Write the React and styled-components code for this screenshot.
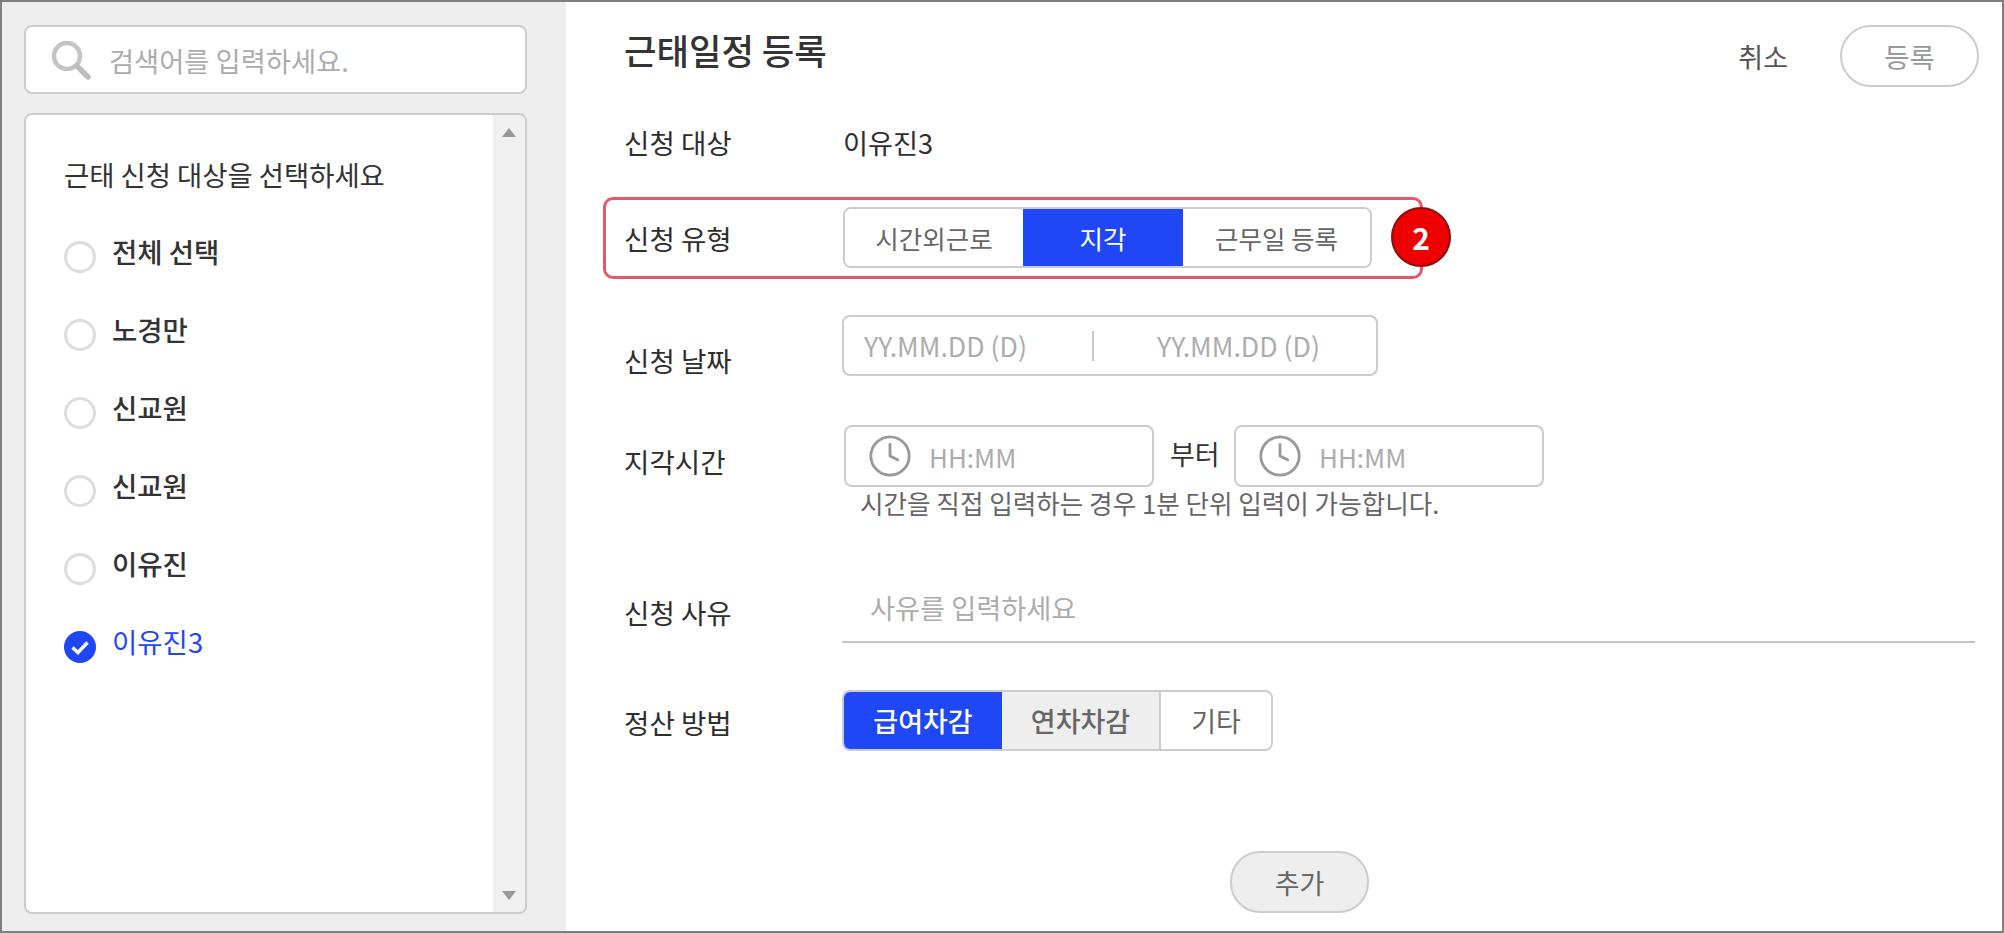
import styled, { createGlobalStyle } from "styled-components";
import { Clock } from "lucide-react";

const MEMBERS = ["전체 선택", "노경만", "신교원", "신교원", "이유진", "이유진3"];

const TYPE_OPTIONS = [
  { text: "시간외근로", width: 178 },
  { text: "지각", width: 160, variant: "active" },
  { text: "근무일 등록", width: 187 },
];

const PAY_OPTIONS = [
  { text: "급여차감", width: 158, variant: "active", bold: true },
  { text: "연차차감", width: 159, variant: "muted", bold: true },
  { text: "기타", width: 110 },
];

const GlobalStyle = createGlobalStyle`
  html, body {
    margin: 0;
    padding: 0;
    background: #fff;
    font-family: "Noto Sans CJK KR", "Noto Sans", sans-serif;
  }
  * {
    box-sizing: border-box;
  }
`;

export default function App() {
  return (
    <>
      <GlobalStyle />
      <Frame>
        <Sidebar>
          <SearchBox>
            <svg width="40" height="40" viewBox="0 0 40 40" fill="none">
              <circle cx="16" cy="16" r="13" stroke="#c4c4c4" strokeWidth="4.5" />
              <path d="M26 26 L37 37" stroke="#bdbdbd" strokeWidth="5.5" strokeLinecap="round" />
            </svg>
            <SearchText>검색어를 입력하세요.</SearchText>
          </SearchBox>
          <ListBox>
            <ListBody>
              <ListTitle>근태 신청 대상을 선택하세요</ListTitle>
              {MEMBERS.map((name, i) => (
                <MemberRow key={i}>
                  {i === MEMBERS.length - 1 ? (
                    <CheckMark viewBox="0 0 32 32">
                      <circle cx="16" cy="16" r="16" fill="#1f47f5" />
                      <path d="M8.5 16.5 L14 21.5 L23.5 11.5" fill="none" stroke="#fff" strokeWidth="3.4" />
                    </CheckMark>
                  ) : (
                    <Radio />
                  )}
                  <MemberName $selected={i === MEMBERS.length - 1}>{name}</MemberName>
                </MemberRow>
              ))}
            </ListBody>
            <ScrollTrack>
              <ScrollArrow $dir="up" />
              <ScrollArrow $dir="down" />
            </ScrollTrack>
          </ListBox>
        </Sidebar>

        <Main>
          <Header>
            <PageTitle>근태일정 등록</PageTitle>
            <HeaderActions>
              <CancelText>취소</CancelText>
              <SubmitButton>등록</SubmitButton>
            </HeaderActions>
          </Header>

          <Form>
            <Row $top={35}>
              <Label>신청 대상</Label>
              <TargetValue>이유진3</TargetValue>
            </Row>

            <HighlightRow>
              <Label $offset={11}>신청 유형</Label>
              <SegmentGroup $left={1}>
                {TYPE_OPTIONS.map((o) => (
                  <Segment key={o.text} $width={o.width} $variant={o.variant} $size={25.5}>
                    {o.text}
                  </Segment>
                ))}
              </SegmentGroup>
              <Badge>2</Badge>
            </HighlightRow>

            <Row $top={36}>
              <Label $offset={25}>신청 날짜</Label>
              <DateBox>
                <DateText $width={228}>YY.MM.DD (D)</DateText>
                <DateDivider />
                <DateText $left={63}>YY.MM.DD (D)</DateText>
              </DateBox>
            </Row>

            <Row $top={45}>
              <Label $offset={16}>지각시간</Label>
              <TimeBox $left={2}>
                <Clock size={46} strokeWidth={1.5} color="#999" />
                <TimeText>HH:MM</TimeText>
              </TimeBox>
              <FromText>부터</FromText>
              <TimeBox>
                <Clock size={46} strokeWidth={1.5} color="#999" />
                <TimeText>HH:MM</TimeText>
              </TimeBox>
            </Row>
            <Hint>시간을 직접 입력하는 경우 1분 단위 입력이 가능합니다.</Hint>

            <Row $top={58}>
              <Label $offset={13}>신청 사유</Label>
              <ReasonInput>사유를 입력하세요</ReasonInput>
            </Row>

            <Row $top={47}>
              <Label $offset={12}>정산 방법</Label>
              <SegmentGroup>
                {PAY_OPTIONS.map((o) => (
                  <Segment key={o.text} $width={o.width} $variant={o.variant} $bold={o.bold} $size={27}>
                    {o.text}
                  </Segment>
                ))}
              </SegmentGroup>
            </Row>

            <AddRow>
              <AddButton>추가</AddButton>
            </AddRow>
          </Form>
        </Main>
      </Frame>
    </>
  );
}

const Frame = styled.div`
  display: flex;
  width: 2004px;
  height: 933px;
  border: 2px solid #7f7f7f;
  overflow: hidden;
  background: #fff;
`;

const Sidebar = styled.aside`
  flex: 0 0 564px;
  display: flex;
  flex-direction: column;
  padding: 23px 39px 0 22px;
  background: #eeeeee;
`;

const SearchBox = styled.div`
  display: flex;
  align-items: center;
  gap: 18px;
  height: 69px;
  padding-left: 25px;
  background: #fff;
  border: 2px solid #cccccc;
  border-radius: 8px;
`;

const SearchText = styled.span`
  font-size: 27.3px;
  line-height: 40px;
  color: #acacac;
`;

const ListBox = styled.div`
  display: flex;
  height: 801px;
  margin-top: 19px;
  background: #fff;
  border: 2px solid #cccccc;
  border-radius: 8px;
  overflow: hidden;
`;

const ListBody = styled.div`
  flex: 1;
  padding: 39px 0 0 38px;
`;

const ListTitle = styled.div`
  margin-bottom: 21px;
  font-size: 27.4px;
  line-height: 40px;
  color: #333;
`;

const MemberRow = styled.div`
  display: flex;
  align-items: center;
  gap: 16px;
  height: 78px;
`;

const Radio = styled.span`
  width: 32px;
  height: 32px;
  margin-top: 5px;
  border: 3px solid #dddddd;
  border-radius: 50%;
`;

const CheckMark = styled.svg`
  width: 32px;
  height: 32px;
  margin-top: 5px;
`;

const MemberName = styled.span`
  margin-bottom: 7px;
  font-size: 27.5px;
  font-weight: ${(p) => (p.$selected ? 400 : 500)};
  line-height: 40px;
  color: ${(p) => (p.$selected ? "#1f47f5" : "#333")};
`;

const ScrollTrack = styled.div`
  flex: 0 0 32px;
  display: flex;
  flex-direction: column;
  justify-content: space-between;
  padding: 13px 0 12px;
  background: #f0f0f0;
`;

const ScrollArrow = styled.span`
  align-self: center;
  width: 0;
  height: 0;
  border-left: 7px solid transparent;
  border-right: 7px solid transparent;
  border-top: ${(p) => (p.$dir === "down" ? "9px solid #999" : "none")};
  border-bottom: ${(p) => (p.$dir === "up" ? "9px solid #999" : "none")};
`;

const Main = styled.main`
  flex: 1;
  display: flex;
  flex-direction: column;
  padding: 23px 23px 0 58px;
`;

const Header = styled.header`
  display: flex;
  justify-content: space-between;
  align-items: center;
  height: 62px;
`;

const PageTitle = styled.h1`
  margin: 0 0 12px;
  font-size: 35.3px;
  font-weight: 500;
  line-height: 48px;
  color: #333;
`;

const HeaderActions = styled.div`
  display: flex;
  align-items: center;
  gap: 52px;
`;

const CancelText = styled.span`
  font-size: 27px;
  color: #555;
`;

const SubmitButton = styled.div`
  display: flex;
  justify-content: center;
  align-items: center;
  width: 139px;
  height: 62px;
  font-size: 27.5px;
  color: #999;
  background: #fff;
  border: 2px solid #cccccc;
  border-radius: 31px;
`;

const Form = styled.div`
  display: flex;
  flex-direction: column;
  padding-right: 4px;
`;

const Row = styled.div`
  display: flex;
  align-items: flex-start;
  margin-top: ${(p) => p.$top}px;
`;

const HighlightRow = styled.div`
  position: relative;
  display: flex;
  align-items: flex-start;
  width: 820px;
  margin: 35px 0 0 -21px;
  padding: 7px 0 8px 18px;
  border: 3px solid #e8566a;
  border-radius: 10px;
`;

const Label = styled.div`
  flex: 0 0 218px;
  margin-top: ${(p) => p.$offset || 0}px;
  font-size: 27.6px;
  line-height: 40px;
  color: #2e2e2e;
`;

const TargetValue = styled.div`
  margin-left: 1px;
  font-size: 27.2px;
  line-height: 40px;
  color: #2e2e2e;
`;

const SegmentGroup = styled.div`
  display: flex;
  height: 61px;
  margin-left: ${(p) => p.$left || 0}px;
  border: 2px solid #cccccc;
  border-radius: 8px;
  overflow: hidden;
`;

const Segment = styled.div`
  display: flex;
  justify-content: center;
  align-items: center;
  width: ${(p) => p.$width}px;
  font-size: ${(p) => p.$size}px;
  font-weight: ${(p) => (p.$bold ? 500 : 400)};
  color: ${(p) => (p.$variant === "active" ? "#fff" : "#666")};
  background: ${(p) =>
    p.$variant === "active" ? "#1f47f5" : p.$variant === "muted" ? "#eeeeee" : "#fff"};
  border-right: ${(p) => (p.$variant === "muted" ? "2px solid #cccccc" : "none")};
`;

const Badge = styled.div`
  position: absolute;
  left: 785px;
  top: 7px;
  display: flex;
  justify-content: center;
  align-items: center;
  width: 60px;
  height: 60px;
  font-size: 30px;
  font-weight: 700;
  color: #fff;
  background: #ee0000;
  border: 2px solid #8a0f0f;
  border-radius: 50%;
`;

const DateBox = styled.div`
  display: flex;
  align-items: center;
  width: 536px;
  height: 61px;
  padding-left: 20px;
  border: 2px solid #cccccc;
  border-radius: 8px;
`;

const DateText = styled.span`
  flex: 0 0 ${(p) => (p.$width ? `${p.$width}px` : "auto")};
  margin-left: ${(p) => p.$left || 0}px;
  font-size: 26.7px;
  color: #acacac;
`;

const DateDivider = styled.span`
  width: 2px;
  height: 30px;
  background: #c8c8c8;
`;

const TimeBox = styled.div`
  display: flex;
  align-items: center;
  gap: 16px;
  width: 310px;
  height: 62px;
  margin-left: ${(p) => p.$left || 0}px;
  padding-left: 21px;
  border: 2px solid #cccccc;
  border-radius: 8px;
`;

const TimeText = styled.span`
  font-size: 26px;
  color: #acacac;
`;

const FromText = styled.span`
  width: 80px;
  padding-left: 16px;
  font-size: 27px;
  line-height: 58px;
  color: #333;
`;

const Hint = styled.div`
  margin: -2px 0 0 236px;
  font-size: 25.6px;
  line-height: 36px;
  color: #666;
`;

const ReasonInput = styled.div`
  flex: 1;
  height: 64px;
  padding: 8px 0 0 28px;
  font-size: 27.2px;
  line-height: 40px;
  color: #acacac;
  border-bottom: 2px solid #c4c4c4;
`;

const AddRow = styled.div`
  display: flex;
  justify-content: center;
  margin-top: 100px;
`;

const AddButton = styled.div`
  display: flex;
  justify-content: center;
  align-items: center;
  width: 139px;
  height: 62px;
  font-size: 27px;
  color: #666;
  background: #eeeeee;
  border: 2px solid #cccccc;
  border-radius: 30px;
`;
